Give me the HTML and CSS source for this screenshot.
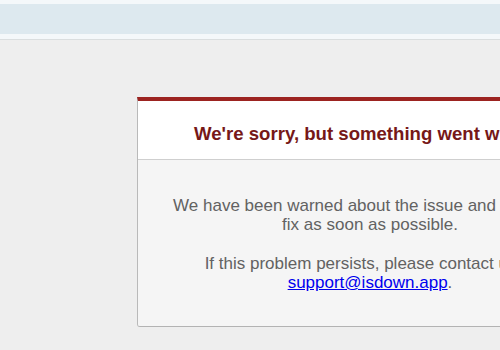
FILE: index.html
```html
<!DOCTYPE html>
<html lang="en">
<head>
<meta charset="utf-8">
<title>We're sorry, but something went wrong</title>
<link rel="stylesheet" href="styles.css">
</head>
<body>
<div class="topbar"><div class="band"></div></div>
<div class="dialog">
  <div class="head">
    <h1>We're sorry, but something went wrong.</h1>
  </div>
  <div class="body">
    <p>We have been warned about the issue and will try to<br>fix as soon as possible.</p>
    <p>If this problem persists, please contact us at<br><a href="mailto:support@isdown.app">support@isdown.app</a>.</p>
  </div>
</div>
</body>
</html>
```
FILE: styles.css
```css
html, body {
  margin: 0;
  padding: 0;
}
body {
  background: #eeeeee;
  font-family: "Liberation Sans", Arial, sans-serif;
  overflow: hidden;
  width: 500px;
  height: 350px;
}
.topbar {
  height: 40px;
  background: #f4f8fa;
  border-bottom: 1px solid #dadedf;
  padding-top: 4px;
  box-sizing: border-box;
}
.band {
  height: 30px;
  background: #dde9ef;
}
.dialog {
  margin: 57px 0 0 137px;
  width: 466px;
  border-top: 4px solid #9c2320;
  border-left: 1px solid #b9b9b9;
  border-right: 1px solid #b9b9b9;
  border-bottom: 1px solid #b3b3b3;
  border-radius: 0 0 3px 3px;
  box-sizing: border-box;
  overflow: hidden;
}
.head {
  background: #ffffff;
  padding: 22px 10px 15px;
  border-bottom: 1px solid #cfcfcf;
  text-align: center;
}
h1 {
  margin: 0;
  font-size: 18.6px;
  line-height: 21px;
  font-weight: bold;
  color: #761818;
  white-space: nowrap;
}
.body {
  background: #f5f5f5;
  padding: 36px 10px 34px;
  text-align: center;
}
.body p {
  margin: 0 0 20px;
  font-size: 17px;
  line-height: 19px;
  color: #626262;
  white-space: nowrap;
}
.body p:last-child {
  margin-bottom: 0;
}
.body a {
  color: #0000ee;
}
```
